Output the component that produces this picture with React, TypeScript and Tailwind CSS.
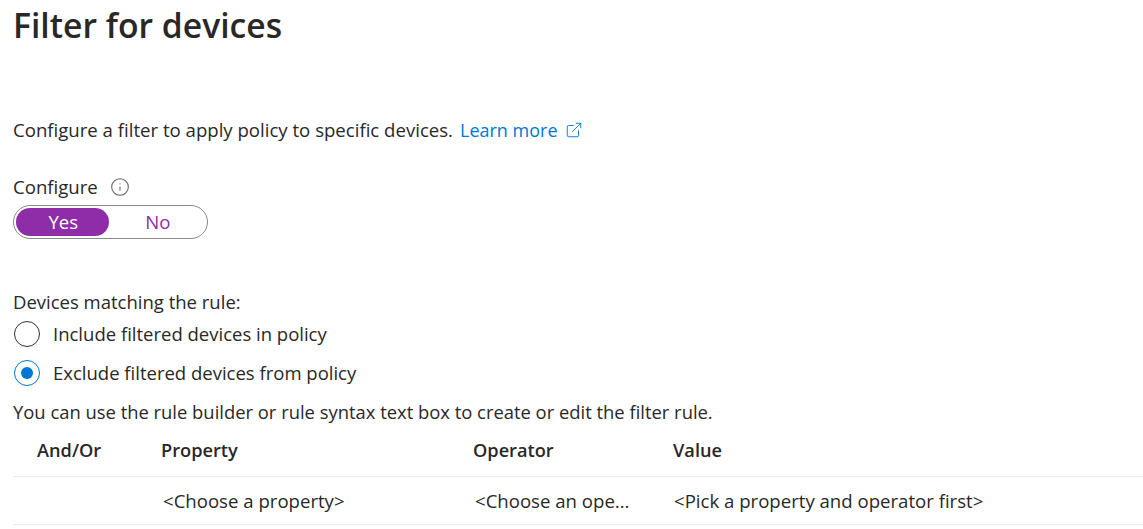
import { ExternalLink, Info } from 'lucide-react'

function Radio({ label, checked }: { label: string; checked?: boolean }) {
  return (
    <div className="flex h-[39px] items-center">
      <span
        className={`ml-[1px] flex h-[26px] w-[26px] items-center justify-center rounded-full border ${
          checked ? 'border-[#0078d4]' : 'border-[#323130]'
        }`}
      >
        {checked && <span className="h-[12px] w-[12px] rounded-full bg-[#0078d4]" />}
      </span>
      <span className="ml-[13px] text-[18.5px]">{label}</span>
    </div>
  )
}

export default function App() {
  return (
    <div className="h-[529px] w-[1143px] overflow-hidden bg-white pl-[13px] font-['Segoe_UI','Open_Sans','Noto_Sans',sans-serif] text-[18.6px] leading-[24px] text-[#292827]">
      <h1 className="h-[118px] pt-[5px] text-[33.7px] leading-[40px] font-semibold">Filter for devices</h1>

      <p className="flex items-center">
        Configure a filter to apply policy to specific devices.
        <a className="ml-[7px] text-[18px] text-[#0078d4]">Learn more</a>
        <ExternalLink className="ml-[7px] h-[18px] w-[18px] text-[#0078d4]" strokeWidth={1.25} />
      </p>

      <div className="mt-[33px] flex items-center">
        Configure
        <Info className="ml-[12px] h-[20px] w-[20px] text-[#605e5c]" strokeWidth={1.25} />
      </div>

      <div className="mt-[6px] flex h-[34px] w-[195px] items-center rounded-full border border-[#8a8886] p-[2px]">
        <span className="flex h-[28px] w-[93px] items-center justify-center rounded-full bg-[#8f2da8] pl-[2px] text-white">Yes</span>
        <span className="flex h-[28px] w-[97px] items-center justify-center pl-[2px] text-[#8f2da8]">No</span>
      </div>

      <p className="mt-[51px] text-[18.5px]">Devices matching the rule:</p>
      <Radio label="Include filtered devices in policy" />
      <Radio label="Exclude filtered devices from policy" checked />

      <p className="mt-[8px] text-[18.4px]">You can use the rule builder or rule syntax text box to create or edit the filter rule.</p>

      <div className="flex h-[53px] items-center border-b border-[#edebe9] text-[18.2px] font-semibold">
        <span className="w-[148px] pl-[24px]">And/Or</span>
        <span className="w-[312px]">Property</span>
        <span className="w-[200px]">Operator</span>
        <span>Value</span>
      </div>
      <div className="flex h-[48px] items-center border-b border-[#edebe9]">
        <span className="w-[150px]" />
        <span className="w-[312px]">&lt;Choose a property&gt;</span>
        <span className="w-[199px]">&lt;Choose an ope...</span>
        <span>&lt;Pick a property and operator first&gt;</span>
      </div>
    </div>
  )
}
